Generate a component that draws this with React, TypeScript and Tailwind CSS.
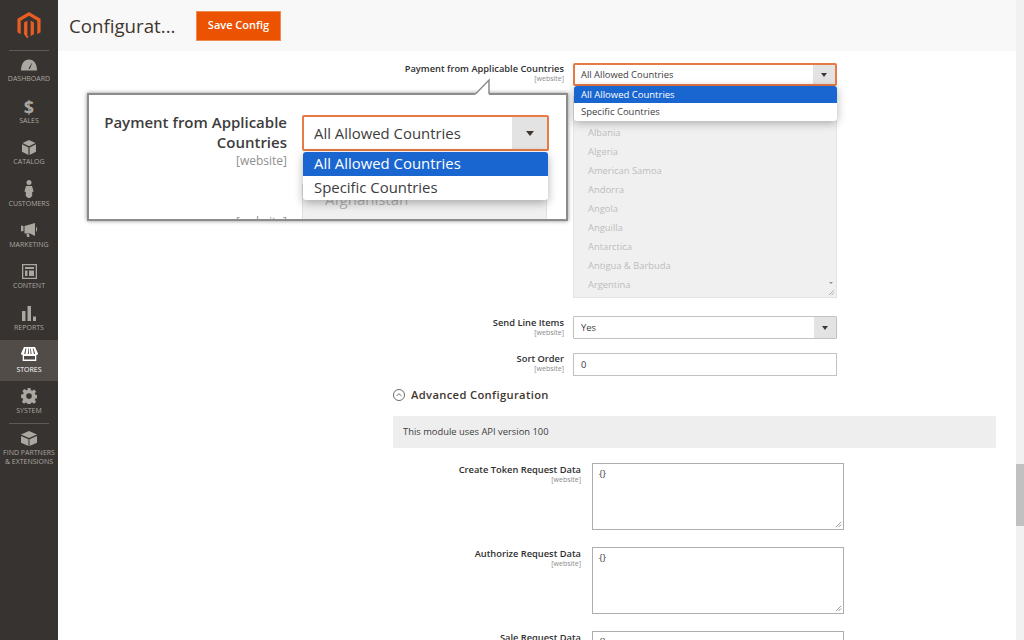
import React from "react";

const font = { fontFamily: '"Open Sans", "Noto Sans", sans-serif' };

const icons: Record<string, React.ReactNode> = {
  DASHBOARD: (
    <svg viewBox="0 0 16 12" className="w-[16px] h-[12px]" fill="#aaa6a0">
      <path d="M0 11.5C0 5 3 .5 8 .5s8 4.5 8 11H0z" />
      <path d="M7.5 9.5 11.5 3l-2.5 7z" fill="#373330" />
    </svg>
  ),
  SALES: null,
  CATALOG: (
    <svg viewBox="0 0 14 15" className="w-[14px] h-[15px]" fill="#aaa6a0">
      <path d="M7 0 13.5 3 7 6.2.5 3z" />
      <path d="M0 4.2 6.4 7.4V15L0 11.8zM14 4.2 7.6 7.4V15l6.4-3.2z" />
    </svg>
  ),
  CUSTOMERS: (
    <svg viewBox="0 0 10 18" className="w-[10px] h-[18px]" fill="#aaa6a0">
      <circle cx="5" cy="2.6" r="2.5" />
      <path d="M2 6h6l1.6 5.5-1.4.4V16l-2.2 2H4l-2.2-2v-4.1L.4 11.5z" />
    </svg>
  ),
  MARKETING: (
    <svg viewBox="0 0 16 14" className="w-[16px] h-[14px]" fill="#aaa6a0">
      <path d="M0 2.500 2.500 3v5L0 8.500zM3.500 3 14 0v13L9 10.500H3.500z" />
      <path d="M15 3.500 16 5v2.500L15 9zM5.500 11h2.500l.5 3H6z" />
    </svg>
  ),
  CONTENT: (
    <svg viewBox="0 0 15 15" className="w-[15px] h-[15px]" fill="#aaa6a0">
      <path fillRule="evenodd" d="M0 0h15v15H0zM1.300 1.300v12.400h12.400V1.300z" />
      <path d="M3 3h9v2H3zM3 6.500h2.500V12H3zM7 6.500h5V12H7z" />
    </svg>
  ),
  REPORTS: (
    <svg viewBox="0 0 14 15" className="w-[14px] h-[15px]" fill="#aaa6a0">
      <path d="M0 5h3.500v10H0zM5.500 0H9v15H5.500zM11 10.500h3V15h-3z" />
    </svg>
  ),
  STORES: (
    <svg viewBox="0 0 17 14" className="w-[17px] h-[14px]" fill="#ffffff">
      <path d="M3 0h11l3 6.500c0 1-1 1.500-1.700 1.500v6H1.700V8C1 8 0 7.500 0 6.500z" />
      <path d="M4.500 1.500 3.200 7h1.200l1-5.500zM7.200 1.500 6.900 7h1l-.1-5.500zM9.200 1.500 9.600 7h1l-.8-5.500zM11.700 1.500 13 7h1.200l-1.700-5.500z" fill="#4f4a46" />
      <path d="M3 9h11v3.500H3z" fill="#4f4a46" />
    </svg>
  ),
  SYSTEM: (
    <svg viewBox="0 0 16 16" className="w-[16px] h-[16px]" fill="#aaa6a0">
      <path fillRule="evenodd" d="M6.500 0h3l.4 2.200 1.300.6 1.900-1.300 2 2-1.300 1.900.6 1.300 2.100.4v3l-2.100.4-.6 1.300 1.300 1.900-2 2-1.900-1.300-1.300.6-.4 2.100h-3l-.4-2.100-1.300-.6-1.900 1.300-2-2 1.300-1.900-.6-1.300L0 9.600v-3l2.100-.4.6-1.300-1.300-1.900 2-2 1.900 1.300 1.300-.6zM8 5.300a2.800 2.800 0 1 0 0 5.600 2.800 2.800 0 0 0 0-5.600z" />
    </svg>
  ),
  PARTNERS: (
    <svg viewBox="0 0 16 15" className="w-[16px] h-[15px]" fill="#aaa6a0">
      <path d="M8 0 16 3.500 8 7 0 3.500z" />
      <path d="M0 5 7.500 8.300V15L0 11.700zM16 5 8.500 8.300V15l7.500-3.300z" />
    </svg>
  ),
};

function Logo() {
  return (
    <svg viewBox="0 0 24 28" className="w-[24px] h-[27px]" fill="#e85d22">
      <path d="M12 0 24 7v14l-3.400 2V9L12 4 3.400 9v14L0 21V7z" />
      <path d="M10.300 8.800v16.200l1.700 1 1.700-1V8.800l3.400 2V23l-5.100 3-1.800 1-.2.100L6.900 23V10.800z" />
    </svg>
  );
}

function NavItem({ label, active }: { label: string; active?: boolean }) {
  return (
    <div className={`h-[41.4px] flex flex-col items-center justify-end pb-[7px] ${active ? "bg-[#514c47]" : ""}`}>
      <div className="flex-1 flex items-center justify-center pt-[5px]">
        {label === "SALES" ? (
          <span className="text-[18px] leading-none font-bold text-[#aaa6a0] translate-y-px">$</span>
        ) : (
          icons[label]
        )}
      </div>
      <span className={`text-[7px] leading-[10px] ${active ? "text-white translate-y-px" : "text-[#aaa6a0]"}`}>{label}</span>
    </div>
  );
}

function Sidebar() {
  return (
    <aside className="w-[58px] h-full shrink-0 bg-[#373330] flex flex-col">
      <div className="h-[50px] shrink-0 flex items-start justify-center pt-[12px]">
        <Logo />
      </div>
      <div className="mx-[9px] h-px bg-[#5f5a55] -mb-px" />
      {["DASHBOARD", "SALES", "CATALOG", "CUSTOMERS", "MARKETING", "CONTENT", "REPORTS"].map((l) => (
        <NavItem key={l} label={l} />
      ))}
      <NavItem label="STORES" active />
      <NavItem label="SYSTEM" />
      <div className="mx-[9px] h-px bg-[#5f5a55]" />
      <div className="flex flex-col items-center pt-[7px]">
        {icons.PARTNERS}
        <span className="mt-[2px] text-[7px] leading-[9px] text-[#aaa6a0] text-center whitespace-nowrap">
          FIND PARTNERS
          <br />& EXTENSIONS
        </span>
      </div>
    </aside>
  );
}

function Arrow({ big }: { big?: boolean }) {
  return (
    <div className={`shrink-0 bg-[#e3e3e3] flex items-center justify-center ${big ? "w-[35px]" : "w-[22px]"}`}>
      <div
        className={
          big
            ? "w-0 h-0 border-l-[4.5px] border-r-[4.5px] border-t-[5px] border-l-transparent border-r-transparent border-t-[#41362f]"
            : "w-0 h-0 border-l-[3.5px] border-r-[3.5px] border-t-[4px] border-l-transparent border-r-transparent border-t-[#41362f]"
        }
      />
    </div>
  );
}

function Label({ title, width }: { title: string; width?: string }) {
  return (
    <div className={`text-right pt-[1px] ${width ?? ""}`}>
      <div className="text-[9.300px] leading-[11px] font-semibold text-[#303030]">{title}</div>
      <div className="text-[7px] leading-[9px] text-[#8a8a8a]">[website]</div>
    </div>
  );
}

const countries = ["Albania", "Algeria", "American Samoa", "Andorra", "Angola", "Anguilla", "Antarctica", "Antigua & Barbuda", "Argentina"];

function Textarea() {
  return (
    <div className="relative w-[252px] h-[67px] border border-[#adadad] bg-white pl-[6px] pt-[3px] text-[9.500px] leading-[14px] text-[#3d3d3d]">
      {"{}"}
      <svg viewBox="0 0 8 8" className="absolute right-[1px] bottom-[1px] w-[7px] h-[7px]" stroke="#8f8f8f" fill="none">
        <path d="M1 7 7 1M4 7 7 4" />
      </svg>
    </div>
  );
}

function Callout() {
  return (
    <div className="absolute left-[29px] top-[93px] w-[481px] h-[128px] bg-white border-2 border-[#8c8c8c] shadow-[0_0_4px_rgba(0,0,0,0.45)]">
      <svg viewBox="0 0 15 16" className="absolute left-[386px] -top-[16px] w-[15px] h-[16px] overflow-visible">
        <path d="M0 15.500 14 1V15.500" fill="#ffffff" stroke="#8c8c8c" strokeWidth="1.500" />
        <path d="M0.500 15 14 15" stroke="#ffffff" strokeWidth="2" transform="translate(0 1)" />
      </svg>
      <div className="h-full overflow-hidden relative">
        <div className="absolute right-[279px] top-[17px] w-[200px] text-right text-[15px] leading-[20px] font-semibold text-[#3d3d3d]">
          Payment from Applicable Countries
        </div>
        <div className="absolute right-[279px] top-[58px] text-[12px] leading-[16px] text-[#8f8f8f]">[website]</div>
        <div className="absolute right-[279px] top-[119px] text-[12px] leading-[16px] text-[#8f8f8f]">[website]</div>
        <div className="absolute left-[213px] top-[89px] w-[245px] h-[40px] bg-[#f0f0f0] border border-[#e0e0e0] pl-[22px] pt-[4px] text-[15px] leading-[20px] text-[#b3b3b3]">
          Afghanistan
        </div>
        <div className="absolute left-[213px] top-[20px] w-[247px] h-[36px] flex border-2 border-[#e77a46] rounded-[2px] bg-white overflow-hidden">
          <div className="flex-1 pl-[10px] text-[14.900px] leading-[32px] text-[#3d3d3d]">All Allowed Countries</div>
          <Arrow big />
        </div>
        <div className="absolute left-[214px] top-[57px] w-[245px] h-[48px] rounded-[3px] bg-white overflow-hidden shadow-[0_3px_10px_rgba(0,0,0,0.3)] text-[14.900px] leading-[24px]">
          <div className="bg-[#1a66d0] text-white pl-[11px] h-[24px] leading-[22px]">All Allowed Countries</div>
          <div className="text-[#3d3d3d] pl-[11px] h-[24px] leading-[22px]">Specific Countries</div>
        </div>
      </div>
    </div>
  );
}

export default function App() {
  return (
    <div className="w-[1024px] h-[640px] overflow-hidden flex bg-white" style={font}>
      <Sidebar />
      <div className="relative flex-1 min-w-0 flex flex-col overflow-hidden">
        <header className="h-[51px] shrink-0 bg-[#f8f8f8] flex items-center pl-[11px] gap-[20px]">
          <h1 className="w-[107px] text-[18.700px] leading-[26px] text-[#41362f] whitespace-nowrap">Configurat...</h1>
          <button className="w-[85px] h-[30px] bg-[#eb5202] text-white text-[11px] font-semibold border border-[#f08a55]">Save Config</button>
        </header>

        <main className="flex-1 min-h-0 pt-[12px]">
          <div className="grid grid-cols-[506px_264px] gap-x-[9px]">
            <div className="-mt-px">
              <Label title="Payment from Applicable Countries" />
            </div>
            <div className="h-[23px] flex border-2 border-[#e77a46] rounded-[2px] bg-white">
              <div className="flex-1 pl-[6px] text-[9.400px] leading-[19px] text-[#3d3d3d]">All Allowed Countries</div>
              <Arrow />
            </div>

            <div />
            <div className="mt-[10px] h-[202px] bg-[#f0f0f0] border border-[#e3e3e3] relative overflow-hidden pl-[14px] pt-[26px]">
              {countries.map((c) => (
                <div key={c} className="h-[19px] text-[9.400px] leading-[19px] text-[#bdbdbd]">{c}</div>
              ))}
              <div className="absolute right-[3px] bottom-[13px] w-0 h-0 border-l-[2px] border-r-[2px] border-t-[2px] border-l-transparent border-r-transparent border-t-[#8f8f8f]" />
              <svg viewBox="0 0 8 8" className="absolute right-[1px] bottom-[1px] w-[7px] h-[7px]" stroke="#a8a8a8" fill="none">
                <path d="M1 7 7 1M4 7 7 4" />
              </svg>
            </div>

            <div className="mt-[18px]">
              <Label title="Send Line Items" />
            </div>
            <div className="mt-[18px] h-[23px] flex border border-[#c2c2c2] rounded-[1px] bg-white">
              <div className="flex-1 pl-[7px] text-[9.400px] leading-[21px] text-[#3d3d3d]">Yes</div>
              <Arrow />
            </div>

            <div className="mt-[13px]">
              <Label title="Sort Order" />
            </div>
            <div className="mt-[14px] h-[23px] border border-[#c2c2c2] bg-white pl-[7px] text-[9.400px] leading-[21px] text-[#3d3d3d]">0</div>
          </div>

          <div className="ml-[335px] w-[603px]">
            <div className="mt-[11px] h-[16px] flex items-center gap-[6px]">
              <svg viewBox="0 0 13 13" className="w-[12px] h-[12px]" fill="none" stroke="#41362f" strokeWidth="0.800">
                <circle cx="6.500" cy="6.500" r="6" />
                <path d="M4 7.500 6.500 5 9 7.500" />
              </svg>
              <span className="text-[11.200px] leading-[16px] font-semibold tracking-[0.35px] text-[#41362f]">Advanced Configuration</span>
            </div>
            <div className="mt-[13px] h-[32px] bg-[#eeeeee] pl-[10px] text-[9.400px] leading-[31px] text-[#3d3d3d]">
              This module uses API version 100
            </div>
            <div className="mt-[15px] flex flex-col gap-[17px]">
              <div className="flex gap-[11px]">
                <Label title="Create Token Request Data" width="w-[188px]" />
                <Textarea />
              </div>
              <div className="flex gap-[11px]">
                <Label title="Authorize Request Data" width="w-[188px]" />
                <Textarea />
              </div>
              <div className="flex gap-[11px]">
                <Label title="Sale Request Data" width="w-[188px]" />
                <Textarea />
              </div>
            </div>
          </div>
        </main>

        <div className="absolute left-[516px] top-[86px] w-[263px] h-[35px] rounded-[3px] bg-white overflow-hidden shadow-[0_2px_10px_rgba(0,0,0,0.3)] text-[9.500px] leading-[17px]">
          <div className="h-[17px] bg-[#1a66d0] text-white pl-[7px]">All Allowed Countries</div>
          <div className="h-[18px] text-[#3d3d3d] pl-[7px]">Specific Countries</div>
        </div>

        <Callout />

        <div className="absolute right-0 top-0 bottom-0 w-[8px] bg-[#f1f1f1]">
          <div className="absolute top-[464px] h-[62px] left-0 right-0 bg-[#c1c1c1]" />
        </div>
      </div>
    </div>
  );
}
